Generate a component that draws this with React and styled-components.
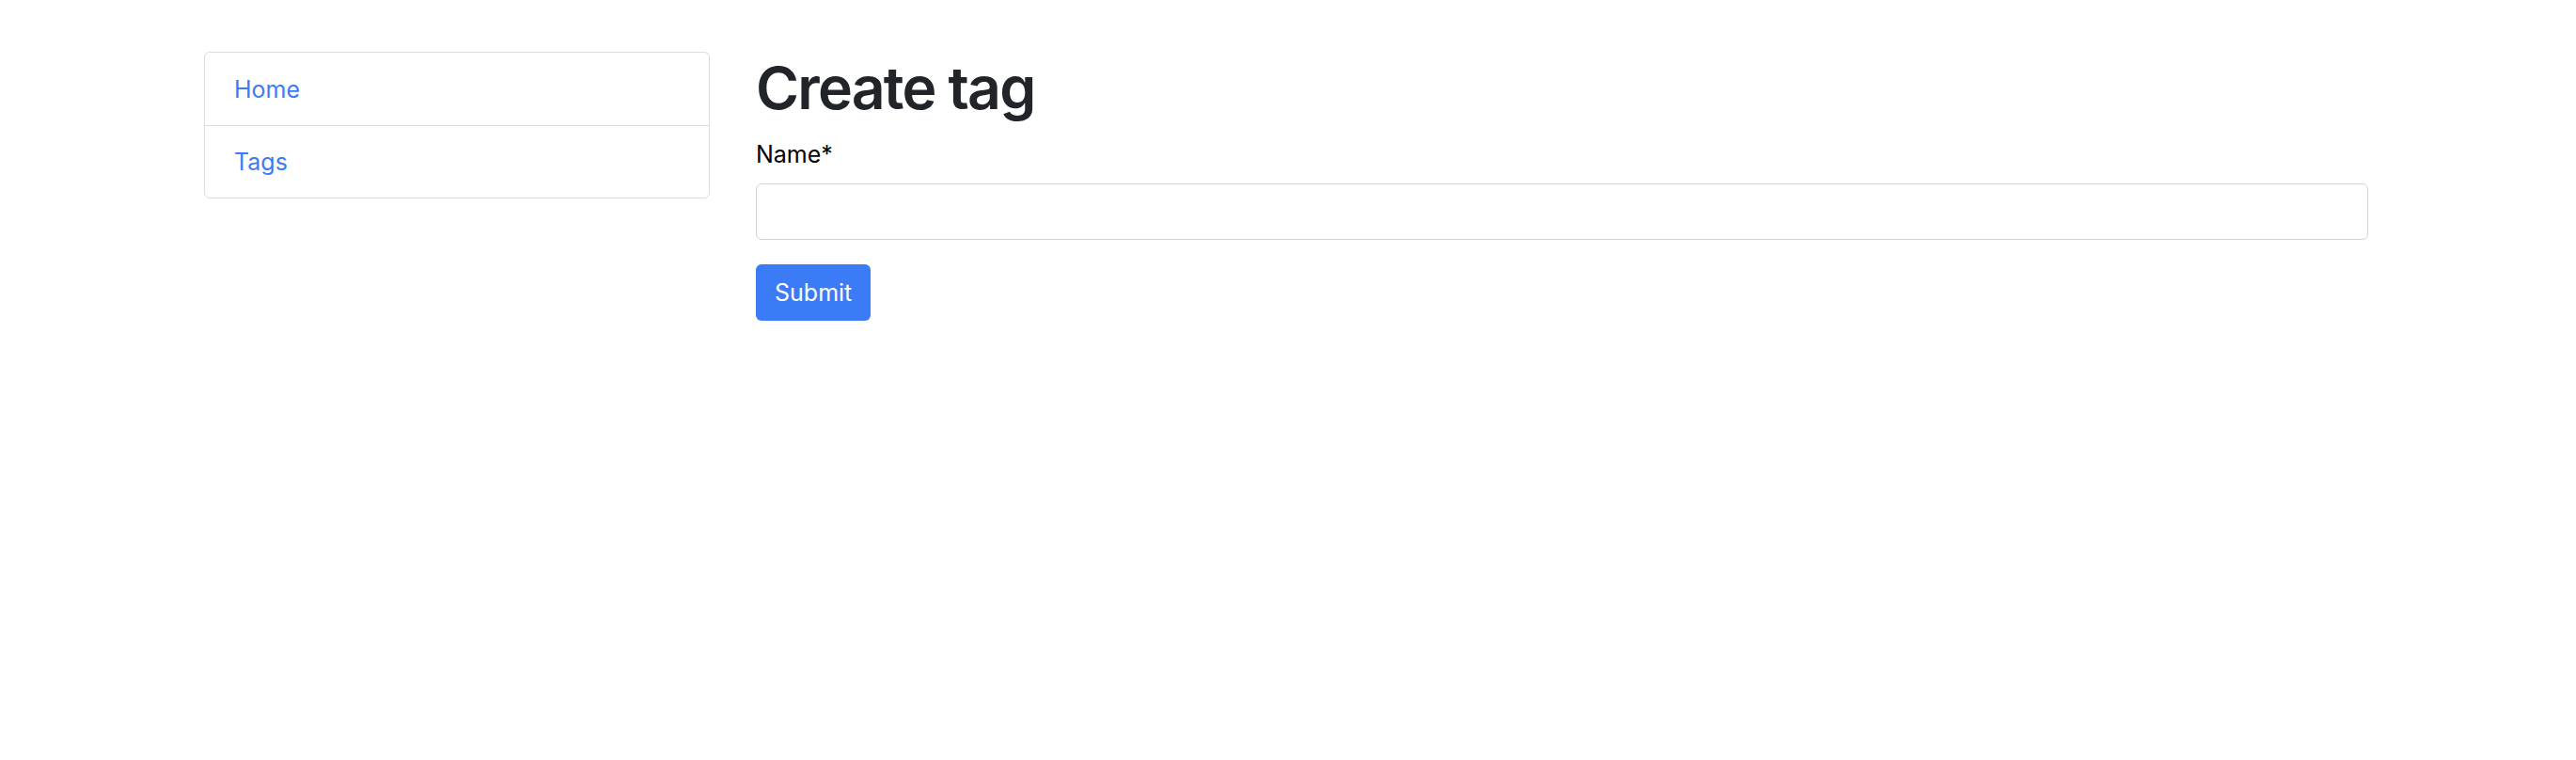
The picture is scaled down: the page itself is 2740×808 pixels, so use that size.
import React from "react";
import styled, { createGlobalStyle } from "styled-components";

const GlobalStyle = createGlobalStyle`
  body {
    margin: 0;
    background: #ffffff;
    font-family: Inter, "Liberation Sans", sans-serif;
    color: #000000;
  }
`;

const Page = styled.div`
  width: 2302px;
  margin: 0 0 0 217px;
  padding-top: 55px;
  display: flex;
  align-items: flex-start;
  gap: 49px;
`;

const Nav = styled.ul`
  list-style: none;
  margin: 0;
  padding: 0;
  width: 538px;
  flex-shrink: 0;
  border: 1.5px solid #dcdcdc;
  border-radius: 6px;
  box-sizing: border-box;
`;

const NavItem = styled.li`
  height: 77px;
  padding: 0 31px;
  display: flex;
  align-items: center;
  box-sizing: border-box;
  border-top: ${(p) => (p.first ? "none" : "1.5px solid #dcdcdc")};
`;

const NavLink = styled.a`
  color: #3b7cf6;
  text-decoration: none;
  font-size: 25px;
  cursor: pointer;
`;

const Main = styled.main`
  flex: 1;
  padding-top: 1px;
`;

const Title = styled.h1`
  margin: 0 0 15px;
  font-size: 62.5px;
  font-weight: 600;
  line-height: 1.2;
  color: #212529;
  letter-spacing: -1.8px;
`;

const Label = styled.label`
  display: block;
  font-size: 25px;
  line-height: 37.5px;
  margin-bottom: 11px;
  color: #000000;
`;

const Input = styled.input`
  display: block;
  width: 100%;
  height: 60px;
  box-sizing: border-box;
  border: 1.5px solid #d4d4d4;
  border-radius: 6px;
  padding: 0 18px;
  font-size: 25px;
  font-family: inherit;
  margin-bottom: 26px;
  outline: none;
`;

const Button = styled.button`
  height: 60px;
  padding: 0 20px;
  border: none;
  border-radius: 6px;
  background: #3b7cf6;
  color: #ffffff;
  font-size: 25px;
  font-family: inherit;
  cursor: pointer;
`;

export default function App() {
  return (
    <>
      <GlobalStyle />
      <Page>
        <Nav>
          <NavItem first>
            <NavLink>Home</NavLink>
          </NavItem>
          <NavItem>
            <NavLink>Tags</NavLink>
          </NavItem>
        </Nav>
        <Main>
          <Title>Create tag</Title>
          <form onSubmit={(e) => e.preventDefault()}>
            <Label htmlFor="name">Name*</Label>
            <Input id="name" type="text" />
            <Button type="submit">Submit</Button>
          </form>
        </Main>
      </Page>
    </>
  );
}
